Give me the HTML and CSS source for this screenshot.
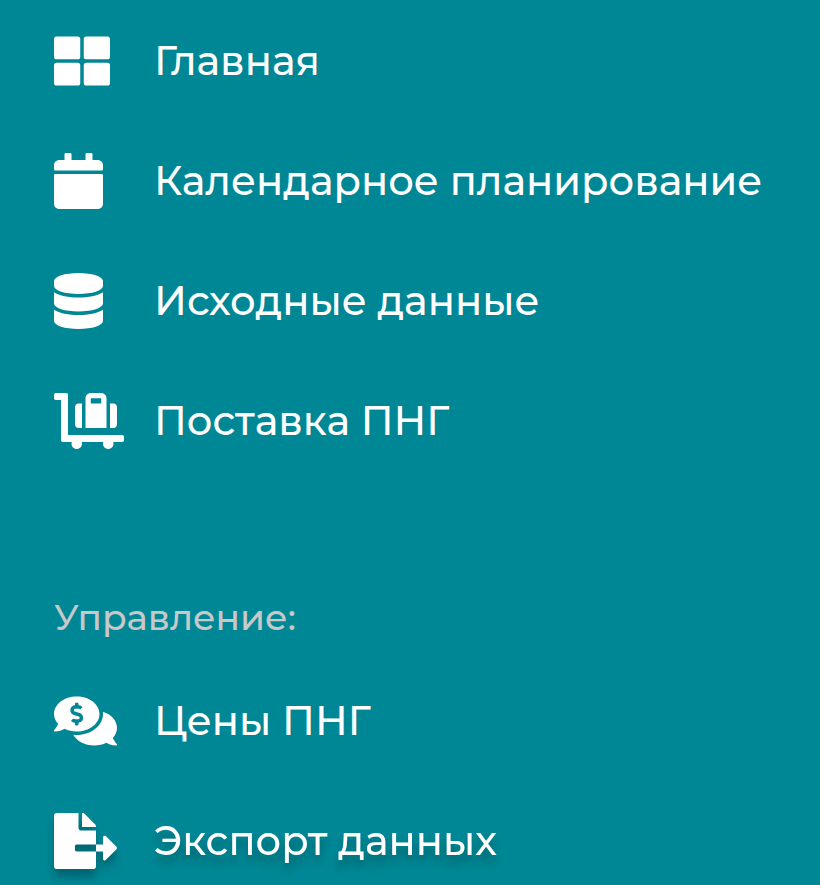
FILE: index.html
```html
<!DOCTYPE html>
<html lang="ru">
<head>
<meta charset="utf-8">
<meta name="viewport" content="width=device-width, initial-scale=1">
<title>Меню</title>
<link rel="stylesheet" href="styles.css">
</head>
<body>
<nav class="menu">
  <ul class="menu-list">
    <li><a class="menu-link" href="#home">
      <svg class="icon" viewBox="0 0 640 512" aria-hidden="true"><rect y="32" width="240" height="208" rx="24"/><rect x="272" y="32" width="240" height="208" rx="24"/><rect y="272" width="240" height="208" rx="24"/><rect x="272" y="272" width="240" height="208" rx="24"/></svg>
      <span>Главная</span></a></li>
    <li><a class="menu-link" href="#calendar">
      <svg class="icon" viewBox="0 0 640 512" aria-hidden="true"><path d="M12 192h424c6.600 0 12 5.400 12 12v260c0 26.500-21.500 48-48 48H48c-26.500 0-48-21.500-48-48V204c0-6.600 5.400-12 12-12zm436-44v-36c0-26.500-21.500-48-48-48h-48V12c0-6.600-5.400-12-12-12h-40c-6.600 0-12 5.400-12 12v52H160V12c0-6.600-5.400-12-12-12h-40c-6.600 0-12 5.400-12 12v52H48C21.500 64 0 85.500 0 112v36c0 6.600 5.400 12 12 12h424c6.600 0 12-5.400 12-12z"/></svg>
      <span>Календарное планирование</span></a></li>
    <li><a class="menu-link" href="#source">
      <svg class="icon" viewBox="0 0 640 512" aria-hidden="true"><path d="M448 73.143v45.714C448 159.143 347.667 192 224 192S0 159.143 0 118.857V73.143C0 32.857 100.333 0 224 0s224 32.857 224 73.143zM448 176v102.857C448 319.143 347.667 352 224 352S0 319.143 0 278.857V176c48.125 33.143 136.208 48.572 224 48.572S399.874 209.143 448 176zm0 160v102.857C448 479.143 347.667 512 224 512S0 479.143 0 438.857V336c48.125 33.143 136.208 48.572 224 48.572S399.874 369.143 448 336z"/></svg>
      <span>Исходные данные</span></a></li>
    <li><a class="menu-link" href="#supply">
      <svg class="icon" viewBox="0 0 640 512" aria-hidden="true"><path d="M224 320h32V96h-32c-17.670 0-32 14.330-32 32v160c0 17.670 14.330 32 32 32zm352-32V128c0-17.670-14.330-32-32-32h-32v224h32c17.670 0 32-14.330 32-32zm48 96H128V16c0-8.840-7.160-16-16-16H16C7.160 0 0 7.160 0 16v32c0 8.840 7.160 16 16 16h48v368c0 8.840 7.160 16 16 16h82.940c-1.790 5.030-2.940 10.360-2.940 16 0 26.510 21.490 48 48 48s48-21.490 48-48c0-5.640-1.150-10.970-2.940-16h197.880c-1.790 5.030-2.940 10.360-2.940 16 0 26.510 21.490 48 48 48s48-21.490 48-48c0-5.640-1.150-10.970-2.940-16H624c8.840 0 16-7.160 16-16v-32c0-8.840-7.160-16-16-16zM480 96V48c0-26.510-21.490-48-48-48h-96c-26.510 0-48 21.490-48 48v272h192V96zm-48 0h-96V48h96v48z"/></svg>
      <span>Поставка ПНГ</span></a></li>
  </ul>
  <h2 class="menu-heading">Управление:</h2>
  <ul class="menu-list">
    <li><a class="menu-link" href="#prices">
      <svg class="icon" viewBox="0 0 640 512" aria-hidden="true"><path d="M416 192c0-88.370-93.120-160-208-160S0 103.630 0 192c0 34.270 14.130 65.950 37.970 91.980C24.610 314.220 2.520 338.160 2.200 338.500A7.995 7.995 0 0 0 8 352c36.580 0 66.930-12.250 88.730-24.980C128.930 342.760 167.020 352 208 352c114.880 0 208-71.630 208-160zm-224 96v-16.290c-11.290-.58-22.270-4.520-31.370-11.350-3.900-2.930-4.100-8.770-.57-12.140l11.750-11.210c2.770-2.640 6.890-2.760 10.130-.73 3.870 2.420 8.260 3.720 12.820 3.720h28.110c6.500 0 11.800-5.920 11.800-13.190 0-5.950-3.610-11.190-8.770-12.730l-45-13.500c-18.590-5.580-31.580-23.420-31.580-43.390 0-24.520 19.050-44.440 42.670-45.070V96c0-4.420 3.580-8 8-8h16c4.420 0 8 3.580 8 8v16.290c11.290.58 22.270 4.510 31.370 11.350 3.900 2.930 4.100 8.770.57 12.140l-11.750 11.210c-2.770 2.640-6.890 2.760-10.130.73-3.870-2.430-8.260-3.720-12.820-3.720h-28.110c-6.500 0-11.800 5.920-11.800 13.190 0 5.950 3.610 11.190 8.770 12.730l45 13.500c18.590 5.580 31.580 23.420 31.580 43.390 0 24.530-19.050 44.440-42.670 45.070V288c0 4.420-3.580 8-8 8h-16c-4.420 0-8-3.580-8-8zm346.010 123.990C561.870 385.960 576 354.270 576 320c0-66.940-53.490-124.200-129.330-148.070.86 6.600 1.330 13.290 1.330 20.070 0 105.870-107.660 192-240 192-10.780 0-21.320-.77-31.730-1.880C207.800 439.630 281.770 480 368 480c40.980 0 79.070-9.240 111.270-24.980C501.070 467.750 531.420 480 568 480c3.200 0 6.090-1.910 7.340-4.840 1.270-2.940.66-6.340-1.550-8.670-.31-.33-22.420-24.240-35.780-54.500z"/></svg>
      <span>Цены ПНГ</span></a></li>
    <li><a class="menu-link menu-link-raised" href="#export">
      <svg class="icon" viewBox="0 0 640 512" aria-hidden="true"><path d="M384 121.900c0-6.300-2.500-12.400-7-16.900L279.100 7c-4.500-4.500-10.600-7-17-7H256v128h128zM571 308l-95.700-96.400c-10.100-10.100-27.400-3-27.400 11.300V288h-64v64h64v65.200c0 14.300 17.300 21.400 27.400 11.300L571 332c6.600-6.600 6.600-17.400 0-24zm-379 28v-32c0-8.800 7.200-16 16-16h176V160H248c-13.200 0-24-10.800-24-24V0H24C10.700 0 0 10.700 0 24v464c0 13.300 10.700 24 24 24h336c13.300 0 24-10.700 24-24V352H208c-8.800 0-16-7.200-16-16z"/></svg>
      <span>Экспорт данных</span></a></li>
  </ul>
</nav>
</body>
</html>
```
FILE: styles.css
```css
body {
  margin: 0;
  background: #008795;
  color: #fff;
  font-family: Montserrat, Inter, sans-serif;
  font-weight: 500;
}

.menu {
  padding: 17px 24px 0 54px;
}

.menu-list {
  display: flex;
  flex-direction: column;
  gap: 32px;
  margin: 0;
  padding: 0;
  list-style: none;
}

.menu-link {
  display: flex;
  align-items: center;
  gap: 30px;
  min-height: 88px;
  color: inherit;
  font-size: 40px;
  line-height: 48px;
  text-decoration: none;
}

.icon {
  flex: none;
  width: 70px;
  height: 56px;
  fill: currentColor;
}

.menu-link-raised {
  filter: drop-shadow(0 8px 4px rgba(0, 0, 0, 0.25));
}

.menu-heading {
  margin: 128px 0 36px;
  color: #c8c8c8;
  font-size: 36px;
  font-weight: 500;
  line-height: 48px;
}
```
